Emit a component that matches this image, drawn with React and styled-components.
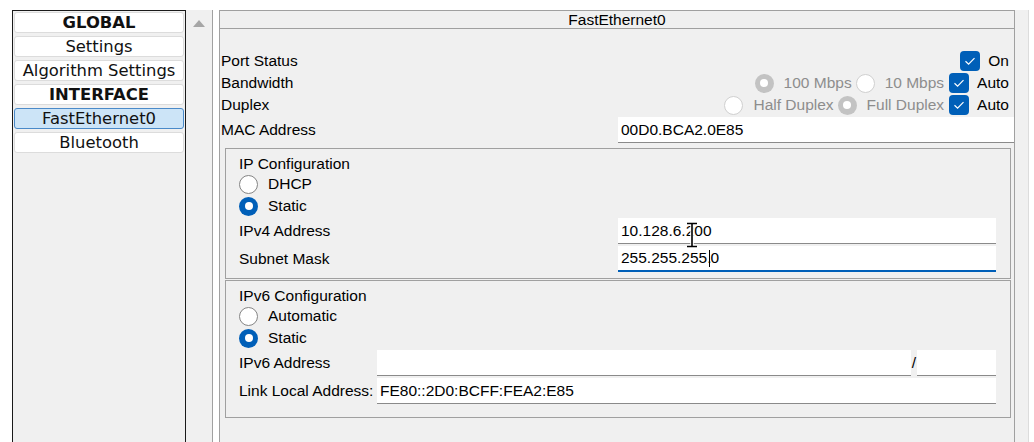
import React from "react";
import styled, { createGlobalStyle, css } from "styled-components";

const GlobalStyle = createGlobalStyle`
  html, body {
    margin: 0;
    padding: 0;
    background: #fff;
  }
  body {
    font-family: "Liberation Sans", Arial, sans-serif;
    overflow: hidden;
  }
`;

const Screen = styled.div`
  display: flex;
  align-items: stretch;
  height: 442px;
  padding: 10px 0 0 12px;
  box-sizing: border-box;
`;

const Sidebar = styled.nav`
  width: 174px;
  box-sizing: border-box;
  border: 1px solid #1a1a1a;
  border-bottom: none;
  background: #f0f0f0;
  padding: 1px 1px 0 1px;
  display: flex;
  flex-direction: column;
  gap: 3px;
`;

const NavButton = styled.div`
  height: 21px;
  box-sizing: border-box;
  border: 1px solid ${({ $active }) => ($active ? "#4a8ac9" : "#dcdcdc")};
  border-radius: 3px;
  background: ${({ $active }) => ($active ? "#cce4f7" : "#fff")};
  font-family: "DejaVu Sans", Verdana, sans-serif;
  font-size: 16.4px;
  font-weight: ${({ $heading }) => ($heading ? "bold" : "normal")};
  line-height: 19px;
  text-align: center;
  white-space: nowrap;
  color: #111;
`;

const ScrollBar = styled.div`
  width: 27px;
  box-sizing: border-box;
  background: #f0f0f0;
  border-right: 1px solid #a0a0a0;
  display: flex;
  justify-content: center;
  padding-top: 10px;
`;

const UpArrow = styled.div`
  width: 0;
  height: 0;
  border-left: 6px solid transparent;
  border-right: 6px solid transparent;
  border-bottom: 7px solid #a6a6a6;
`;

const Panel = styled.section`
  width: 796px;
  margin-left: 6px;
  box-sizing: border-box;
  border: 1px solid #a0a0a0;
  border-bottom: none;
  background: #f0f0f0;
  display: flex;
  flex-direction: column;
`;

const Track = styled.div`
  width: 14px;
  box-sizing: border-box;
  background: #f0f0f0;
  border-right: 1px solid #dcdcdc;
`;

const TitleBar = styled.div`
  height: 17px;
  border-bottom: 1px solid #a0a0a0;
  text-align: center;
  font-size: 15.5px;
  line-height: 17px;
  color: #000;
`;

const Body = styled.div`
  padding: 21px 0 0 1px;
  font-size: 15.5px;
  color: #000;
`;

const Row = styled.div`
  display: flex;
  align-items: center;
  height: 22px;
  padding-right: 5px;
`;

const RowLabel = styled.div`
  flex: 1;
`;

const Controls = styled.div`
  display: flex;
  align-items: center;
`;

const Choice = styled.span`
  display: inline-flex;
  align-items: center;
  gap: ${({ $gap }) => $gap ?? 10}px;
  margin-left: ${({ $ml }) => $ml ?? 0}px;
  color: ${({ $disabled }) => ($disabled ? "#8d8d8d" : "#000")};
`;

const Radio = styled.span`
  position: relative;
  width: 19px;
  height: 19px;
  border-radius: 50%;
  box-sizing: border-box;
  flex: none;
  ${({ $checked, $disabled }) =>
    $checked
      ? css`
          background: ${$disabled ? "#c3c3c3" : "#005fb8"};
          &::after {
            content: "";
            position: absolute;
            left: 5.5px;
            top: 5.5px;
            width: 8px;
            height: 8px;
            border-radius: 50%;
            background: #fff;
          }
        `
      : css`
          background: #fff;
          border: 1px solid ${$disabled ? "#d0d0d0" : "#858585"};
        `}
`;

const Box = styled.span`
  width: 20px;
  height: 20px;
  border-radius: 4px;
  background: #005fb8;
  display: inline-flex;
  align-items: center;
  justify-content: center;
  flex: none;
`;

const Check = () => (
  <Box>
    <svg width="20" height="20" viewBox="0 0 20 20">
      <path d="M5.5 10.2 L8.6 13.2 L14.5 7.2" fill="none" stroke="#fff" strokeWidth="1.2" />
    </svg>
  </Box>
);

const FieldRow = styled.div`
  display: flex;
  align-items: stretch;
  height: 26px;
  margin-top: ${({ $mt }) => $mt ?? 0}px;
`;

const FieldLabel = styled.div`
  width: ${({ $w }) => $w}px;
  flex: none;
  display: flex;
  align-items: center;
  white-space: nowrap;
`;

const Field = styled.div`
  position: relative;
  flex: ${({ $w }) => ($w ? "none" : "1")};
  width: ${({ $w }) => ($w ? `${$w}px` : "auto")};
  box-sizing: border-box;
  background: #fff;
  border-bottom: ${({ $focus }) => ($focus ? "2px solid #005fb8" : "1px solid #8a8a8a")};
  padding-left: 3px;
  display: flex;
  align-items: center;
  font-size: 15.5px;
  white-space: nowrap;
`;

const Slash = styled.span`
  width: 6px;
  flex: none;
  display: flex;
  align-items: center;
  justify-content: center;
`;

const Caret = styled.span`
  display: inline-block;
  width: 1px;
  height: 17px;
  background: #000;
  margin: 0 1px 0 -3px;
`;

const Cursor = styled.svg`
  position: absolute;
  left: 67px;
  top: 4px;
  z-index: 2;
`;

const Group = styled.div`
  margin: ${({ $mt }) => $mt}px 3px 0 4px;
  border: 1px solid #a0a0a0;
  padding: 5px 14px ${({ $pb }) => $pb}px 13px;
`;

const GroupTitle = styled.div`
  height: 19px;
  display: flex;
  align-items: center;
`;

const RadioRow = styled.div`
  height: 22px;
  display: flex;
  align-items: center;
  gap: 10px;
`;

const navItems = [
  { label: "GLOBAL", heading: true },
  { label: "Settings" },
  { label: "Algorithm Settings" },
  { label: "INTERFACE", heading: true },
  { label: "FastEthernet0", active: true },
  { label: "Bluetooth" },
];

const App = () => {
  return (
    <>
      <GlobalStyle />
      <Screen>
        <Sidebar>
          {navItems.map((item) => (
            <NavButton key={item.label} $heading={item.heading} $active={item.active}>
              {item.label}
            </NavButton>
          ))}
        </Sidebar>
        <ScrollBar>
          <UpArrow />
        </ScrollBar>
        <Panel>
          <TitleBar>FastEthernet0</TitleBar>
          <Body>
            <Row>
              <RowLabel>Port Status</RowLabel>
              <Controls>
                <Choice $gap={8}>
                  <Check />
                  On
                </Choice>
              </Controls>
            </Row>
            <Row>
              <RowLabel>Bandwidth</RowLabel>
              <Controls>
                <Choice $disabled>
                  <Radio $checked $disabled />
                  100 Mbps
                </Choice>
                <Choice $disabled $ml={4}>
                  <Radio $disabled />
                  10 Mbps
                </Choice>
                <Choice $gap={8} $ml={5}>
                  <Check />
                  Auto
                </Choice>
              </Controls>
            </Row>
            <Row>
              <RowLabel>Duplex</RowLabel>
              <Controls>
                <Choice $disabled>
                  <Radio $disabled />
                  Half Duplex
                </Choice>
                <Choice $disabled $ml={4}>
                  <Radio $checked $disabled />
                  Full Duplex
                </Choice>
                <Choice $gap={8} $ml={5}>
                  <Check />
                  Auto
                </Choice>
              </Controls>
            </Row>
            <FieldRow $mt={1}>
              <FieldLabel $w={397}>MAC Address</FieldLabel>
              <Field>00D0.BCA2.0E85</Field>
            </FieldRow>

            <Group $mt={5} $pb={6}>
              <GroupTitle>IP Configuration</GroupTitle>
              <RadioRow>
                <Radio />
                DHCP
              </RadioRow>
              <RadioRow>
                <Radio $checked />
                Static
              </RadioRow>
              <FieldRow $mt={1}>
                <FieldLabel $w={379}>IPv4 Address</FieldLabel>
                <Field>
                  10.128.6.200
                  <Cursor width="14" height="26" viewBox="0 0 14 26">
                    <path
                      d="M2 1.5 H12 M7 1.5 V24.5 M2 24.5 H12"
                      fill="none"
                      stroke="#fff"
                      strokeWidth="3.5"
                    />
                    <path
                      d="M2 1.5 H12 M7 1.5 V24.5 M2 24.5 H12"
                      fill="none"
                      stroke="#000"
                      strokeWidth="1.6"
                    />
                  </Cursor>
                </Field>
              </FieldRow>
              <FieldRow $mt={2}>
                <FieldLabel $w={379}>Subnet Mask</FieldLabel>
                <Field $focus>
                  255.255.255.
                  <Caret />
                  0
                </Field>
              </FieldRow>
            </Group>

            <Group $mt={1} $pb={13}>
              <GroupTitle>IPv6 Configuration</GroupTitle>
              <RadioRow>
                <Radio />
                Automatic
              </RadioRow>
              <RadioRow>
                <Radio $checked />
                Static
              </RadioRow>
              <FieldRow $mt={1}>
                <FieldLabel $w={138}>IPv6 Address</FieldLabel>
                <Field />
                <Slash>/</Slash>
                <Field $w={79} />
              </FieldRow>
              <FieldRow $mt={2}>
                <FieldLabel $w={138}>Link Local Address:</FieldLabel>
                <Field>FE80::2D0:BCFF:FEA2:E85</Field>
              </FieldRow>
            </Group>
          </Body>
        </Panel>
        <Track />
      </Screen>
    </>
  );
};

export default App;
